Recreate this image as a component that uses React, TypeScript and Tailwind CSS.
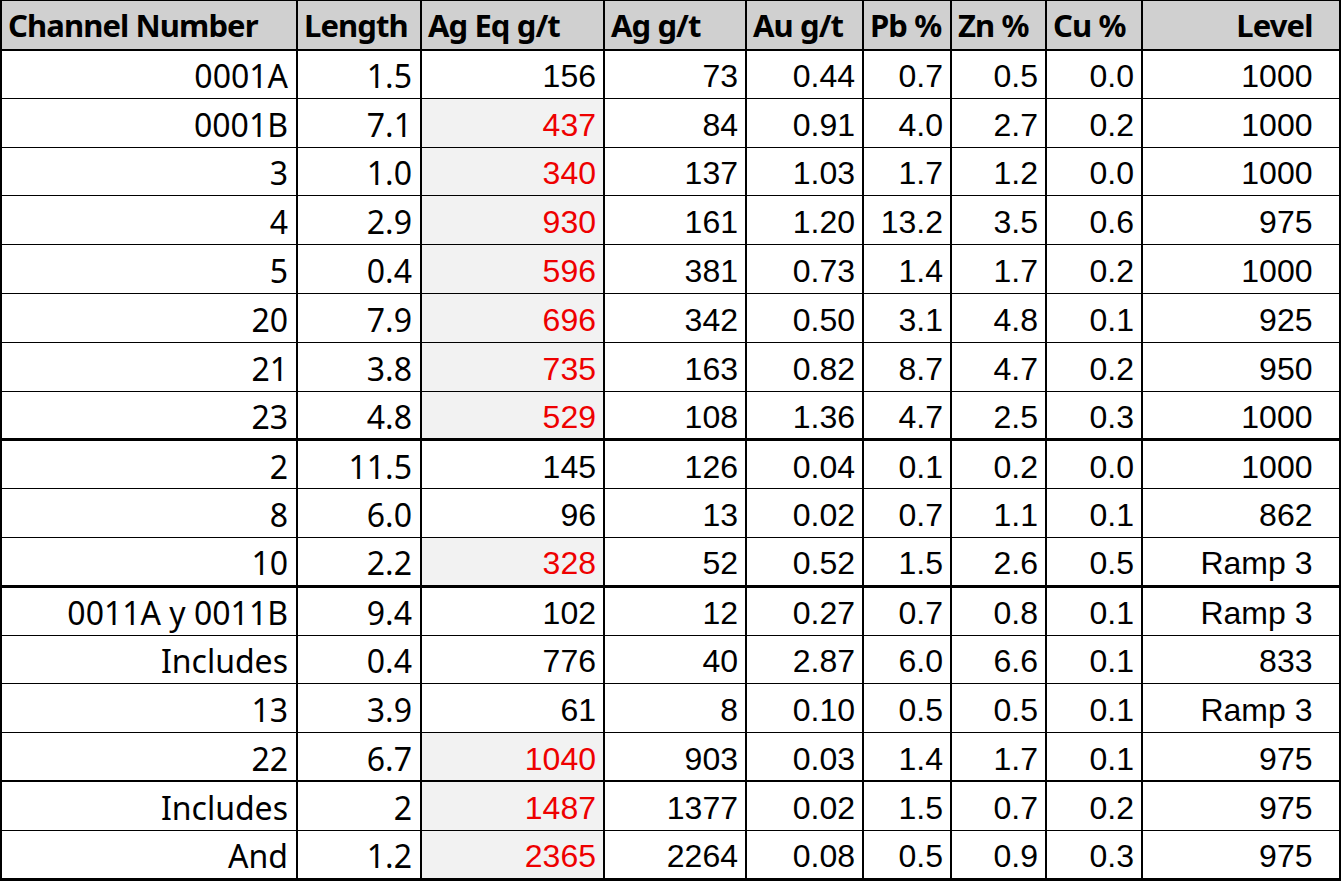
import React from 'react';

type Row = {
  channel: string;
  length: string;
  agEq: string;
  ag: string;
  au: string;
  pb: string;
  zn: string;
  cu: string;
  level: string;
  hot?: boolean; // red Ag Eq value on grey fill
  rule?: 'thick' | 'mid'; // heavier line under the row
};

const rows: Row[] = [
  { channel: '0001A', length: '1.5', agEq: '156', ag: '73', au: '0.44', pb: '0.7', zn: '0.5', cu: '0.0', level: '1000' },
  { channel: '0001B', length: '7.1', agEq: '437', ag: '84', au: '0.91', pb: '4.0', zn: '2.7', cu: '0.2', level: '1000', hot: true },
  { channel: '3', length: '1.0', agEq: '340', ag: '137', au: '1.03', pb: '1.7', zn: '1.2', cu: '0.0', level: '1000', hot: true },
  { channel: '4', length: '2.9', agEq: '930', ag: '161', au: '1.20', pb: '13.2', zn: '3.5', cu: '0.6', level: '975', hot: true },
  { channel: '5', length: '0.4', agEq: '596', ag: '381', au: '0.73', pb: '1.4', zn: '1.7', cu: '0.2', level: '1000', hot: true },
  { channel: '20', length: '7.9', agEq: '696', ag: '342', au: '0.50', pb: '3.1', zn: '4.8', cu: '0.1', level: '925', hot: true },
  { channel: '21', length: '3.8', agEq: '735', ag: '163', au: '0.82', pb: '8.7', zn: '4.7', cu: '0.2', level: '950', hot: true },
  { channel: '23', length: '4.8', agEq: '529', ag: '108', au: '1.36', pb: '4.7', zn: '2.5', cu: '0.3', level: '1000', hot: true, rule: 'thick' },
  { channel: '2', length: '11.5', agEq: '145', ag: '126', au: '0.04', pb: '0.1', zn: '0.2', cu: '0.0', level: '1000' },
  { channel: '8', length: '6.0', agEq: '96', ag: '13', au: '0.02', pb: '0.7', zn: '1.1', cu: '0.1', level: '862' },
  { channel: '10', length: '2.2', agEq: '328', ag: '52', au: '0.52', pb: '1.5', zn: '2.6', cu: '0.5', level: 'Ramp 3', hot: true, rule: 'thick' },
  { channel: '0011A y 0011B', length: '9.4', agEq: '102', ag: '12', au: '0.27', pb: '0.7', zn: '0.8', cu: '0.1', level: 'Ramp 3' },
  { channel: 'Includes', length: '0.4', agEq: '776', ag: '40', au: '2.87', pb: '6.0', zn: '6.6', cu: '0.1', level: '833' },
  { channel: '13', length: '3.9', agEq: '61', ag: '8', au: '0.10', pb: '0.5', zn: '0.5', cu: '0.1', level: 'Ramp 3' },
  { channel: '22', length: '6.7', agEq: '1040', ag: '903', au: '0.03', pb: '1.4', zn: '1.7', cu: '0.1', level: '975', hot: true, rule: 'mid' },
  { channel: 'Includes', length: '2', agEq: '1487', ag: '1377', au: '0.02', pb: '1.5', zn: '0.7', cu: '0.2', level: '975', hot: true },
  { channel: 'And', length: '1.2', agEq: '2365', ag: '2264', au: '0.08', pb: '0.5', zn: '0.9', cu: '0.3', level: '975', hot: true },
];

const headers = ['Channel Number', 'Length', 'Ag Eq g/t', 'Ag g/t', 'Au g/t', 'Pb %', 'Zn %', 'Cu %', 'Level'];

const labelCell =
  "border-r-2 border-black text-right pr-[8px] pt-[4px] font-['Noto_Sans','Open_Sans',sans-serif] text-[32px] leading-none whitespace-nowrap";
const numCell =
  "border-r-2 border-black text-right pr-[7px] pt-[4px] font-['Liberation_Sans',Arial,sans-serif] text-[32px] leading-none";

export default function App() {
  return (
    <div className="w-[1341px] h-[884px] bg-white overflow-hidden">
      <table className="table-fixed border-collapse w-[1339px] border-[3px] border-l-2 border-t border-black text-black">
        <colgroup>
          <col className="w-[296px]" />
          <col className="w-[124px]" />
          <col className="w-[183px]" />
          <col className="w-[142px]" />
          <col className="w-[117px]" />
          <col className="w-[88px]" />
          <col className="w-[95px]" />
          <col className="w-[96px]" />
          <col className="w-[198px]" />
        </colgroup>
        <thead>
          <tr className="h-[49px] bg-[#d0d0d0] border-b-2 border-black">
            {headers.map((h, i) => (
              <th
                key={h}
                className={`border-r-2 border-black px-[6px] pt-[2px] font-['Noto_Sans','Open_Sans',sans-serif] text-[31px] font-bold leading-none tracking-[-0.9px] whitespace-nowrap ${
                  i === 8 ? 'text-right pr-[26px]' : 'text-left'
                }`}
              >
                {h}
              </th>
            ))}
          </tr>
        </thead>
        <tbody>
          {rows.map((r, idx) => (
            <tr
              key={idx}
              className={`h-[48.8px] border-black ${
                r.rule === 'thick' ? 'border-b-[3px]' : r.rule === 'mid' ? 'border-b-2' : 'border-b'
              }`}
            >
              <td className={labelCell}>{r.channel}</td>
              <td className={labelCell}>{r.length}</td>
              <td className={`${numCell} ${r.hot ? 'bg-[#f2f2f2] text-[#ee0000]' : ''}`}>{r.agEq}</td>
              <td className={numCell}>{r.ag}</td>
              <td className={numCell}>{r.au}</td>
              <td className={numCell}>{r.pb}</td>
              <td className={numCell}>{r.zn}</td>
              <td className={numCell}>{r.cu}</td>
              <td className="text-right pr-[26px] pt-[4px] font-['Liberation_Sans',Arial,sans-serif] text-[32px] leading-none whitespace-nowrap">
                {r.level}
              </td>
            </tr>
          ))}
        </tbody>
      </table>
    </div>
  );
}
